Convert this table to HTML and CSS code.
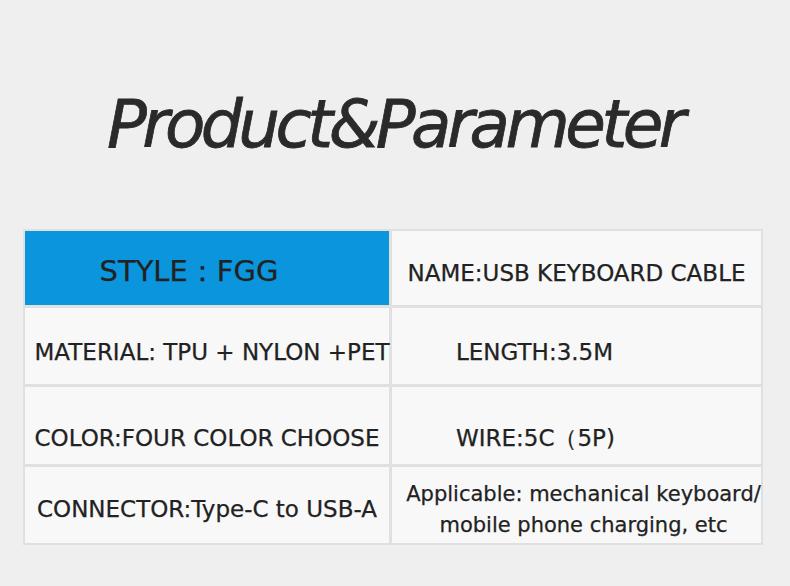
FILE: index.html
```html
<!DOCTYPE html>
<html>
<head>
<meta charset="utf-8">
<link rel="stylesheet" href="styles.css">
</head>
<body>
<div class="page">
  <h1 class="title">Product&amp;Parameter</h1>
  <div class="table">
    <div class="cell cell-blue"><span class="t-style">STYLE：FGG</span></div>
    <div class="cell r1"><span>NAME:USB KEYBOARD CABLE</span></div>
    <div class="cell r2 shift"><span>MATERIAL: TPU + NYLON +PET</span></div>
    <div class="cell r2 left"><span>LENGTH:3.5M</span></div>
    <div class="cell r3"><span>COLOR:FOUR COLOR CHOOSE</span></div>
    <div class="cell r3 left"><span>WIRE:5C（5P)</span></div>
    <div class="cell r4"><span>CONNECTOR:Type-C to USB-A</span></div>
    <div class="cell r4 two"><span>Applicable: mechanical keyboard/<br>mobile phone charging, etc</span></div>
  </div>
</div>
</body>
</html>
```
FILE: styles.css
```css
html, body {
  margin: 0;
  padding: 0;
}
body {
  background: #efefef;
  width: 790px;
  height: 586px;
  overflow: hidden;
  font-family: "DejaVu Sans", sans-serif;
  color: #222;
}
.page {
  padding-top: 80px;
}
.title {
  margin: 0;
  height: 149px;
  padding-left: 107px;
  font-family: "DejaVu Sans", sans-serif;
  font-style: italic;
  font-weight: normal;
  font-size: 66px;
  line-height: 90px;
  color: #2a2a2a;
  letter-spacing: -4.5px;
  -webkit-text-stroke: 0.8px #2a2a2a;
}
.table {
  margin-left: 23px;
  width: 740px;
  box-sizing: border-box;
  padding: 2px;
  background: #e0e0e0;
  display: grid;
  grid-template-columns: 364px 369px;
  grid-template-rows: 74px 76px 77px 76px;
  gap: 3px;
}
.cell {
  background: #f8f8f8;
  display: flex;
  align-items: center;
  justify-content: center;
  font-size: 23px;
  white-space: nowrap;
  overflow: visible;
  -webkit-text-stroke: 0.25px #222;
}
.cell-blue {
  background: #0a95dd;
  padding-top: 8px;
  padding-right: 36px;
  box-sizing: border-box;
}
.t-style {
  font-size: 29px;
  color: #222;
}
.r1 { padding-top: 9px; }
.r2 { padding-top: 12px; }
.r3 { padding-top: 25px; }
.r4 { padding-top: 8px; }
.shift { padding-left: 10px; }
.left {
  justify-content: flex-start;
  padding-left: 64px;
}
.two {
  text-align: center;
  font-size: 21px;
  line-height: 31px;
  padding-top: 10px;
  padding-left: 14px;
}
```
